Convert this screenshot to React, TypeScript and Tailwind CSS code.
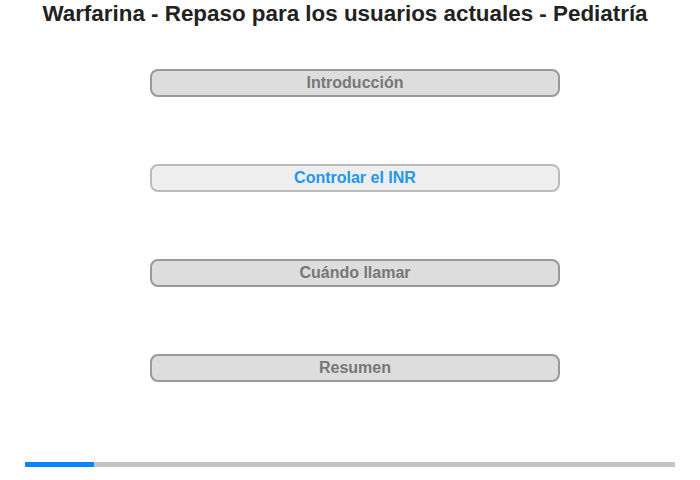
const sections = [
  { label: "Introducción", active: false },
  { label: "Controlar el INR", active: true },
  { label: "Cuándo llamar", active: false },
  { label: "Resumen", active: false },
]

export default function App() {
  const progress = 69 / 650

  return (
    <div className="w-[700px] h-[480px] bg-white font-['Liberation_Sans',Arial,sans-serif] flex flex-col">
      <h1 className="text-center text-[22.4px] font-bold text-[#222] leading-[26px] pt-[1px] pr-[10px]">
        Warfarina - Repaso para los usuarios actuales - Pediatría
      </h1>
      <div className="flex flex-col items-center gap-[67px] mt-[42px] pl-[10px]">
        {sections.map((s) => (
          <button
            key={s.label}
            className={
              s.active
                ? "w-[410px] h-[28px] rounded-[8px] border-2 border-[#bbb] bg-[#eee] text-[16px] font-bold text-[#2196f3] leading-none"
                : "w-[410px] h-[28px] rounded-[8px] border-2 border-[#999] bg-[#ddd] text-[16px] font-bold text-[#777] leading-none"
            }
          >
            {s.label}
          </button>
        ))}
      </div>
      <div className="mt-auto mb-[13px] mx-[25px] h-[5px] bg-[#c4c4c4] flex">
        <div className="h-full bg-[#0a84ff]" style={{ width: `${progress * 100}%` }} />
      </div>
    </div>
  )
}
